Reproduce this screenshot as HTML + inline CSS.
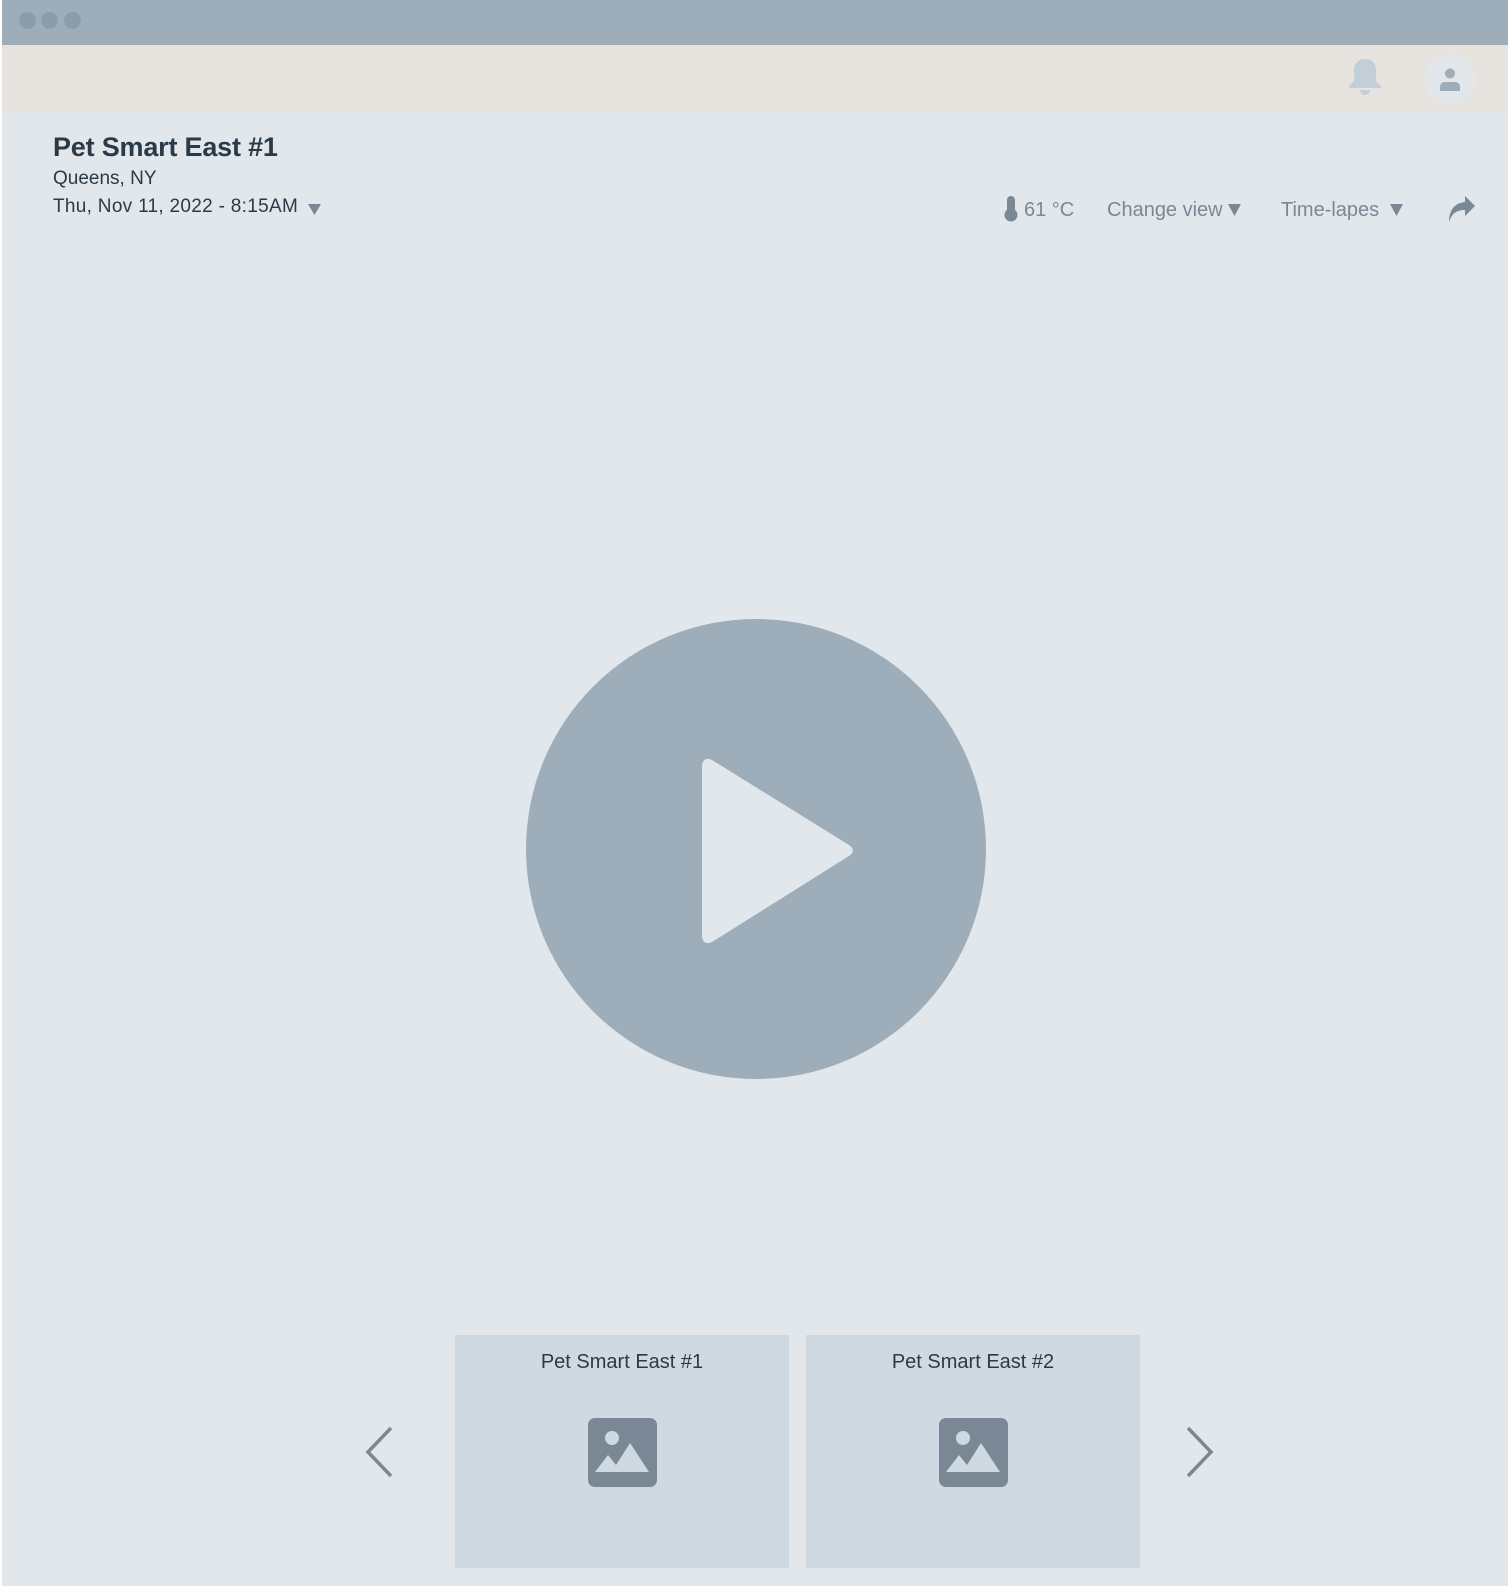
<!DOCTYPE html>
<html><head><meta charset="utf-8"><style>
*{margin:0;padding:0;box-sizing:border-box}
body{width:1508px;height:1586px;background:#fff;position:relative;overflow:hidden;font-family:"Liberation Sans",sans-serif}
.abs{position:absolute}
#page{left:2px;top:0;width:1506px;height:1586px;background:#e2e7eb}
#bar{left:2px;top:0;width:1506px;height:45px;background:#9dadba}
.dot{width:17px;height:17px;border-radius:50%;background:#8c9cab;top:12px}
#hdr{left:2px;top:45px;width:1506px;height:67px;background:#e7e4df}
.t{color:#2b3a47;white-space:nowrap}
.tb{color:#7a8896;font-size:20px;white-space:nowrap;top:199px}
.card{background:#cfd9e1;width:334px;height:233px;top:1335px}
.card .ct{position:absolute;top:16px;width:100%;text-align:center;font-size:20px;color:#2b3a47}
</style></head><body>
<div id="page" class="abs"></div>
<div id="bar" class="abs"></div>
<div class="abs dot" style="left:19px"></div>
<div class="abs dot" style="left:41px"></div>
<div class="abs dot" style="left:64px"></div>
<div id="hdr" class="abs"></div>
<svg class="abs" style="left:1348px;top:58px" width="34" height="40" viewBox="0 0 34 40"><path d="M17 1c-7 0-11 5-11 11v11l-5 5v2h32v-2l-5-5V12C28 6 24 1 17 1z" fill="#c2ced8"/><path d="M12 32a5 5 0 0 0 10 0z" fill="#c2ced8"/></svg>
<div class="abs" style="left:1425px;top:54px;width:50px;height:50px;border-radius:50%;background:#e2e7eb"></div>
<svg class="abs" style="left:1438px;top:67px" width="24" height="24" viewBox="0 0 24 24"><circle cx="12" cy="6.5" r="5" fill="#9dadba"/><path d="M2 24v-4c0-3 2-5 5-5h10c3 0 5 2 5 5v4z" fill="#9dadba"/></svg>
<div class="abs t" style="left:53px;top:132px;font-size:27px;font-weight:bold;letter-spacing:-0.2px">Pet Smart East #1</div>
<div class="abs t" style="left:53px;top:168px;font-size:19px">Queens, NY</div>
<div class="abs t" style="left:53px;top:196px;font-size:19px;letter-spacing:0.3px">Thu, Nov 11, 2022 - 8:15AM</div>
<svg class="abs" style="left:308px;top:204px" width="13" height="11"><path d="M0 0h13L6.5 11z" fill="#7a8896"/></svg>
<svg class="abs" style="left:1003px;top:196px" width="16" height="26" viewBox="0 0 16 26"><rect x="4" y="0" width="8" height="18" rx="4" fill="#7a8896"/><circle cx="8" cy="19" r="6.5" fill="#7a8896"/></svg>
<div class="abs tb" style="left:1024px">61 °C</div>
<div class="abs tb" style="left:1107px">Change view</div>
<svg class="abs" style="left:1228px;top:204px" width="13" height="12"><path d="M0 0h13L6.5 12z" fill="#7a8896"/></svg>
<div class="abs tb" style="left:1281px">Time-lapes</div>
<svg class="abs" style="left:1390px;top:204px" width="13" height="12"><path d="M0 0h13L6.5 12z" fill="#7a8896"/></svg>
<svg class="abs" style="left:1448px;top:195px" width="28" height="28" viewBox="0 0 28 28"><path d="M17 1l10 10-10 10v-6C9 15 4 18 1 27 1 16 6 8 17 7z" fill="#7a8896"/></svg>
<svg class="abs" style="left:526px;top:619px" width="460" height="460" viewBox="0 0 460 460"><circle cx="230" cy="230" r="230" fill="#9eadba"/><path d="M176 147c0-6 5-9 10-6l137 85c5 3 5 8 0 11l-137 86c-5 3-10 0-10-6z" fill="#e2e7eb"/></svg>
<svg class="abs" style="left:364px;top:1426px" width="30" height="52"><path d="M27 2L4 26l23 24" fill="none" stroke="#7a8896" stroke-width="3.5"/></svg>
<svg class="abs" style="left:1185px;top:1426px" width="30" height="52"><path d="M3 2l23 24-23 24" fill="none" stroke="#7a8896" stroke-width="3.5"/></svg>
<div class="abs card" style="left:455px"><div class="ct">Pet Smart East #1</div>
<svg style="position:absolute;left:133px;top:83px" width="69" height="69" viewBox="0 0 69 69"><rect width="69" height="69" rx="7" fill="#7a8896"/><circle cx="24" cy="20" r="7" fill="#cfd9e1"/><path d="M7 54l13-17 8 10 14-22 19 29z" fill="#cfd9e1"/></svg></div>
<div class="abs card" style="left:806px"><div class="ct">Pet Smart East #2</div>
<svg style="position:absolute;left:133px;top:83px" width="69" height="69" viewBox="0 0 69 69"><rect width="69" height="69" rx="7" fill="#7a8896"/><circle cx="24" cy="20" r="7" fill="#cfd9e1"/><path d="M7 54l13-17 8 10 14-22 19 29z" fill="#cfd9e1"/></svg></div>
</body></html>
